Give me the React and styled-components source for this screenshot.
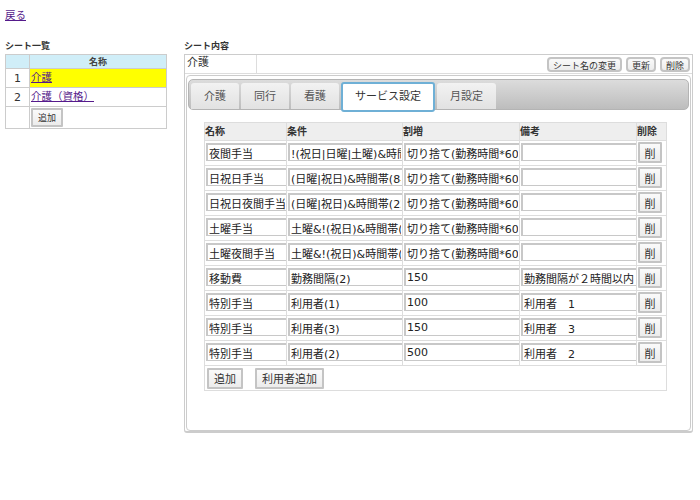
import React from 'react';
import styled, { createGlobalStyle } from 'styled-components';

const font = '"DejaVu Sans", "Noto Sans CJK JP", sans-serif';

const GlobalStyle = createGlobalStyle`
  html, body {
    margin: 0;
    padding: 0;
    background: #fff;
    font-family: ${font};
    font-size: 11px;
    color: #222;
  }
`;

const Page = styled.div`
  width: 700px;
  height: 500px;
  overflow: hidden;
  padding: 9px 8px 0 5px;
  box-sizing: border-box;
`;

const Back = styled.a`
  display: block;
  height: 33px;
  color: #551a8b;
  text-decoration: underline;
  font-size: 10.5px;
  line-height: 13px;
`;

const Columns = styled.div`
  display: flex;
  gap: 17px;
  align-items: flex-start;
`;

const Side = styled.section`
  width: 162px;
  flex: none;
`;

const Main = styled.section`
  width: 509px;
  flex: none;
`;

const Heading = styled.h2`
  margin: 0;
  height: 9px;
  font-size: 9px;
  line-height: 9px;
  font-weight: bold;
  color: #333;
`;

const ListTable = styled.table`
  width: 162px;
  margin-top: 3px;
  border-collapse: collapse;
  table-layout: fixed;
  border: 1px solid #ccc;

  th, td {
    border: 1px solid #ccc;
    padding: 0 1px;
  }
`;

const ListHead = styled.th`
  height: 13px;
  background: #d0eef8;
  font-size: 9px;
  line-height: 12px;
  color: #444;
`;

const ListRow = styled.tr`
  height: ${({ $h }) => $h}px;
  background: ${({ $active }) => ($active ? '#ffff00' : '#fff')};
`;

const IndexCell = styled.td`
  background: #fff;
  text-align: center;
  font-size: 11px;
  color: #333;
`;

const SheetLink = styled.a`
  display: block;
  width: fit-content;
  color: #551a8b;
  text-decoration: underline;
  font-size: 10.5px;
  line-height: 15px;
  margin-top: -1px;
`;

const Button = styled.button`
  height: ${({ $h }) => $h || 21}px;
  padding: 0 ${({ $px }) => $px ?? 6}px;
  font-family: ${font};
  font-size: ${({ $fs }) => $fs || 11}px;
  color: #333;
  background: linear-gradient(#fafafa, #ececec);
  border: 2px solid #c4c4c4;
  border-radius: ${({ $round }) => ($round ? 4 : 1)}px;
  white-space: nowrap;
`;

const Panel = styled.div`
  display: flex;
  flex-direction: column;
  height: 379px;
  margin-top: 3px;
  border: 1px solid #ccc;
  border-bottom-width: 2px;
  box-sizing: border-box;
  border-radius: 0 0 3px 3px;
`;

const TitleBar = styled.div`
  display: flex;
  align-items: center;
  flex: none;
  height: 19px;
  box-sizing: border-box;
  border-bottom: 1px solid #ddd;
`;

const SheetName = styled.div`
  width: 72px;
  height: 100%;
  padding-left: 2px;
  box-sizing: border-box;
  line-height: 15px;
  border-right: 1px solid #ddd;
  color: #333;
`;

const Actions = styled.div`
  display: flex;
  gap: 4px;
  margin-left: auto;
  padding-right: 2px;
`;

const TabArea = styled.div`
  flex: none;
  height: 356px;
  margin: 1px 1px 0;
  padding: 3px 1px 0;
  box-sizing: border-box;
  border: 1px solid #ccc;
  border-radius: 4px;
`;

const TabBar = styled.div`
  display: flex;
  gap: 2px;
  height: 31px;
  padding: 3px 0 0 2px;
  box-sizing: border-box;
  background: linear-gradient(#dcdcdc, #bdbdbd);
  border: 1px solid #b4b4b4;
  border-radius: 5px;
`;

const Tab = styled.div`
  flex: none;
  height: ${({ $active }) => ($active ? 30 : 26)}px;
  margin-top: ${({ $active }) => ($active ? -1 : 0)}px;
  padding: 0 ${({ $active }) => ($active ? 12 : 13)}px;
  box-sizing: border-box;
  font-size: 11px;
  line-height: ${({ $active }) => ($active ? 26 : 28)}px;
  color: ${({ $active }) => ($active ? '#333' : '#555')};
  background: ${({ $active }) => ($active ? '#fff' : 'linear-gradient(#f2f2f2, #e2e2e2)')};
  border: ${({ $active }) => ($active ? '2px solid #6fb0d6' : 'none')};
  border-radius: ${({ $active }) => ($active ? '3px' : '3px 3px 0 0')};
`;

const Grid = styled.table`
  width: 462px;
  margin: 12px 0 0 16px;
  border-collapse: collapse;
  table-layout: fixed;
  border: 1px solid #ddd;

  td, th {
    border: 1px solid #ddd;
    padding: 0;
  }
`;

const GridHead = styled.th`
  height: 17px;
  background: #eee;
  font-size: 10px;
  line-height: 14px;
  font-weight: bold;
  text-align: left;
  color: #333;
`;

const GridRow = styled.tr`
  height: 25px;
`;

const Cell = styled.td`
  vertical-align: middle;
`;

const Field = styled.input`
  display: block;
  width: 100%;
  height: 18px;
  margin: -2px 0 0 1px;
  padding: 0 1px;
  box-sizing: border-box;
  font-family: ${font};
  font-size: 11px;
  color: #222;
  background: #fff;
  border: 2px solid #c8c8c8;
  border-right-width: 1px;
  border-bottom-width: 1px;
  outline: none;
`;

const DeleteButton = styled(Button)`
  display: block;
  width: 24px;
  height: 21px;
  margin: -1px 0 0 1px;
  padding: 0;
`;

const FooterCell = styled.td`
  height: 24px;
  padding-left: 2px !important;
`;

const FooterButtons = styled.div`
  display: flex;
  gap: 12px;
`;

const rows = [
  ['夜間手当', '!(祝日|日曜|土曜)&時間帯(22-5)', '切り捨て(勤務時間*600)', ''],
  ['日祝日手当', '(日曜|祝日)&時間帯(8-22)', '切り捨て(勤務時間*600)', ''],
  ['日祝日夜間手当', '(日曜|祝日)&時間帯(22-5)', '切り捨て(勤務時間*600)', ''],
  ['土曜手当', '土曜&!(祝日)&時間帯(8-22)', '切り捨て(勤務時間*600)', ''],
  ['土曜夜間手当', '土曜&!(祝日)&時間帯(22-5)', '切り捨て(勤務時間*600)', ''],
  ['移動費', '勤務間隔(2)', '150', '勤務間隔が２時間以内'],
  ['特別手当', '利用者(1)', '100', '利用者　1'],
  ['特別手当', '利用者(3)', '150', '利用者　3'],
  ['特別手当', '利用者(2)', '500', '利用者　2'],
];

const tabs = ['介護', '同行', '看護', 'サービス設定', '月設定'];

const App = () => (
  <Page>
    <GlobalStyle />
    <Back href="#">戻る</Back>
    <Columns>
      <Side>
        <Heading>シート一覧</Heading>
        <ListTable>
          <colgroup>
            <col width="24" />
            <col />
          </colgroup>
          <thead>
            <tr>
              <ListHead />
              <ListHead>名称</ListHead>
            </tr>
          </thead>
          <tbody>
            <ListRow $h={19} $active>
              <IndexCell>1</IndexCell>
              <td><SheetLink href="#">介護</SheetLink></td>
            </ListRow>
            <ListRow $h={19}>
              <IndexCell>2</IndexCell>
              <td><SheetLink href="#">介護（資格）</SheetLink></td>
            </ListRow>
            <ListRow $h={22}>
              <IndexCell />
              <td><Button $h={19} $px={5} $fs={9}>追加</Button></td>
            </ListRow>
          </tbody>
        </ListTable>
      </Side>
      <Main>
        <Heading>シート内容</Heading>
        <Panel>
          <TitleBar>
            <SheetName>介護</SheetName>
            <Actions>
              <Button $h={15} $px={4} $fs={9} $round>シート名の変更</Button>
              <Button $h={15} $px={4} $fs={9} $round>更新</Button>
              <Button $h={15} $px={4} $fs={9} $round>削除</Button>
            </Actions>
          </TitleBar>
          <TabArea>
            <TabBar>
              {tabs.map((tab) => (
                <Tab key={tab} $active={tab === 'サービス設定'}>{tab}</Tab>
              ))}
            </TabBar>
            <Grid>
              <colgroup>
                <col width="82" />
                <col width="116" />
                <col width="117" />
                <col width="117" />
                <col width="30" />
              </colgroup>
              <thead>
                <tr>
                  <GridHead>名称</GridHead>
                  <GridHead>条件</GridHead>
                  <GridHead>割増</GridHead>
                  <GridHead>備考</GridHead>
                  <GridHead>削除</GridHead>
                </tr>
              </thead>
              <tbody>
                {rows.map((row, i) => (
                  <GridRow key={i}>
                    {row.map((value, j) => (
                      <Cell key={j}><Field defaultValue={value} /></Cell>
                    ))}
                    <Cell><DeleteButton>削</DeleteButton></Cell>
                  </GridRow>
                ))}
                <tr>
                  <FooterCell colSpan={5}>
                    <FooterButtons>
                      <Button $px={5}>追加</Button>
                      <Button $px={5}>利用者追加</Button>
                    </FooterButtons>
                  </FooterCell>
                </tr>
              </tbody>
            </Grid>
          </TabArea>
        </Panel>
      </Main>
    </Columns>
  </Page>
);

export default App;
